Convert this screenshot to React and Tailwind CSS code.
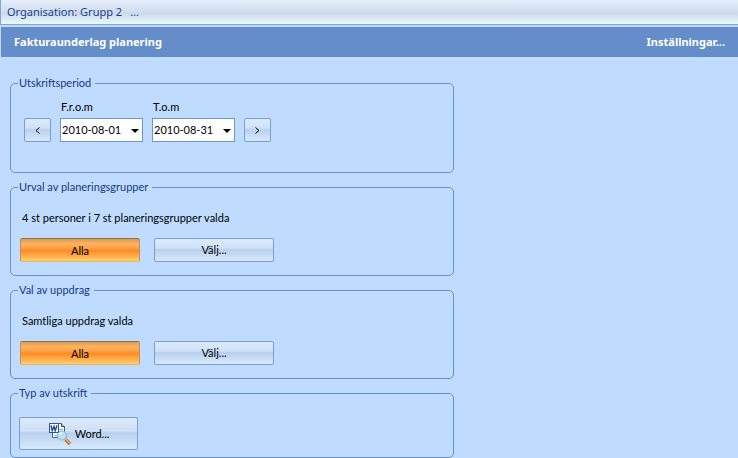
import React, { useState } from 'react';
import clsx from 'clsx';

const BUTTON_BASE = "rounded-[2px] border text-[11px] leading-4 text-black";
const BUTTON_BLUE = "border-[#7a9fcf] bg-[linear-gradient(#dcebfc_0%,#cfe1f7_42%,#b9d0ed_48%,#c5daf4_70%,#d9eafd_100%)]";
const BUTTON_ORANGE = "border-[#c09060] border-t-[#8c7350] border-b-[#e8b860] bg-[linear-gradient(#dc9a50_0%,#fdb460_22%,#ff9f45_42%,#ff8a26_52%,#ffa742_72%,#ffce6e_100%)]";

const Group = ({ title, children }) => (
  <fieldset className="min-w-0 rounded-[5px] border border-[#6590c8]">
    <legend className="ml-[7px] pl-px pr-1 text-[11px] leading-4 text-[#15397f]">{title}</legend>
    {children}
  </fieldset>
);

const DateField = ({ id, label, value, onChange, options }) => (
  <div className="w-[83px]">
    <label htmlFor={id} className="block pb-[3px] pl-px text-[11px] leading-4 text-black">
      {label}
    </label>
    <div className="relative">
      <select
        id={id}
        value={value}
        onChange={(e) => onChange(e.target.value)}
        className="block h-6 w-full appearance-none border border-[#6d97cb] bg-white pl-px text-[11px] leading-4 text-black"
      >
        {options.map((option) => (
          <option key={option}>{option}</option>
        ))}
      </select>
      <svg className="pointer-events-none absolute right-1 top-[11px]" width="8" height="4" viewBox="0 0 8 4">
        <path d="M0 0h8L4 4z" fill="#000" />
      </svg>
    </div>
  </div>
);

const StepButton = ({ label, children }) => (
  <button type="button" aria-label={label} className={clsx(BUTTON_BASE, BUTTON_BLUE, 'flex h-6 w-[27px] items-center justify-center')}>
    {children}
  </button>
);

const Selection = ({ text }) => {
  const [all, setAll] = useState(true);

  return (
    <div className="px-[9px] pb-[13px] pt-[15px]">
      <p className="pl-[2px] text-[11px] leading-4 text-black">{text}</p>
      <div className="mt-3 flex gap-[14px]">
        <button
          type="button"
          onClick={() => setAll(true)}
          className={clsx(BUTTON_BASE, all ? BUTTON_ORANGE : BUTTON_BLUE, 'h-6 w-[120px] pt-[2px]')}
        >
          Alla
        </button>
        <button
          type="button"
          onClick={() => setAll(false)}
          className={clsx(BUTTON_BASE, all ? BUTTON_BLUE : BUTTON_ORANGE, 'h-6 w-[120px]')}
        >
          Välj...
        </button>
      </div>
    </div>
  );
};

const WordPreviewIcon = () => (
  <svg width="24" height="24" viewBox="0 0 24 24" aria-hidden="true">
    <path d="M4.500 1.500h9l3 3v11h-12z" fill="#fff" stroke="#4a5f86" />
    <path d="M13.500 1.500v3h3" fill="#dfe8f5" stroke="#33415f" />
    <path d="M11 7.500h4M11 9.500h4M6 13.500h5" stroke="#9aacc9" />
    <rect x="1.500" y="1.500" width="9" height="9" fill="#f4f8ff" stroke="#2c56a5" />
    <path d="M3 3.500l1.200 5L6 4.500l1.200 4L9 3.500" fill="none" stroke="#1d469c" strokeWidth="1.400" />
    <path d="M17.500 17.500l4.500 4.500" stroke="#b86a28" strokeWidth="3.200" />
    <path d="M17.500 17l4.500 4.500" stroke="#f7ac62" strokeWidth="1.500" />
    <circle cx="14" cy="13.500" r="4.500" fill="#b9e2f8" stroke="#86afd4" />
    <path d="M11.500 13a2.500 2.500 0 0 1 2.500-2.200" fill="none" stroke="#fff" strokeWidth="1.200" />
  </svg>
);

const App = () => {
  const [from, setFrom] = useState('2010-08-01');
  const [to, setTo] = useState('2010-08-31');

  return (
    <div className="min-h-screen bg-[#bfdbff] font-['Lato',Arial,sans-serif]">
      {/* Organisation bar */}
      <div className="flex h-[25px] items-center gap-2 border-b border-l border-[#7fa6d8] bg-[linear-gradient(#e6effb_0%,#d8e2f2_35%,#cdd9ea_55%,#dfeef5_85%,#e6fbfb_100%)] pl-[6px] font-['Noto_Sans',sans-serif] text-[11px] leading-4 text-[#15428b]">
        <span>Organisation: Grupp 2</span>
        <button type="button" aria-label="Välj organisation">...</button>
      </div>

      {/* Title bar */}
      <header className="mt-[2px] ml-px flex h-[30px] items-center justify-between bg-[#658dc9] px-[13px] font-['Noto_Sans',sans-serif] text-[11px] font-bold leading-4 text-white">
        <h1>Fakturaunderlag planering</h1>
        <a href="#installningar">Inställningar...</a>
      </header>

      <main className="flex max-w-[464px] flex-col gap-[6px] px-[10px] pt-[18px]">
        <Group title="Utskriftsperiod">
          <div className="flex items-end gap-[9px] px-[13px] pb-[30px] pt-2">
            <StepButton label="Föregående period">
              <svg width="5" height="7" viewBox="0 0 5 7">
                <path d="M4.500 0.500L1 3.500l3.500 3" fill="none" stroke="#000" />
              </svg>
            </StepButton>
            <DateField id="from" label="F.r.o.m" value={from} onChange={setFrom} options={['2010-08-01', '2010-09-01']} />
            <DateField id="to" label="T.o.m" value={to} onChange={setTo} options={['2010-08-31', '2010-09-30']} />
            <StepButton label="Nästa period">
              <svg width="5" height="7" viewBox="0 0 5 7">
                <path d="M0.500 0.500L4 3.500L0.500 6.500" fill="none" stroke="#000" />
              </svg>
            </StepButton>
          </div>
        </Group>

        <Group title="Urval av planeringsgrupper">
          <Selection text="4 st personer i 7 st planeringsgrupper valda" />
        </Group>

        <Group title="Val av uppdrag">
          <Selection text="Samtliga uppdrag valda" />
        </Group>

        <Group title="Typ av utskrift">
          <div className="px-2 pb-[7px] pt-4">
            <button type="button" className={clsx(BUTTON_BASE, BUTTON_BLUE, 'flex h-[33px] w-[119px] items-center justify-center gap-[3px]')}>
              <WordPreviewIcon />
              Word...
            </button>
          </div>
        </Group>
      </main>
    </div>
  );
};

export default App;
